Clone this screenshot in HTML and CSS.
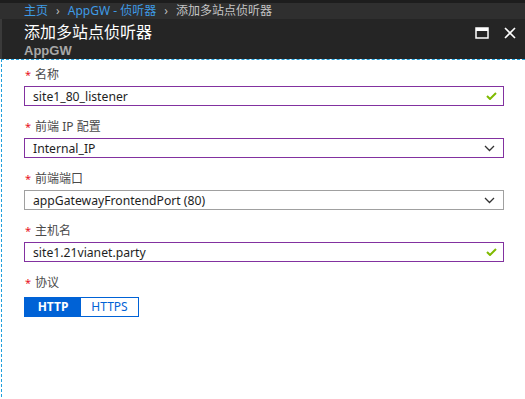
FILE: index.html
```html
<!DOCTYPE html>
<html lang="zh">
<head>
<meta charset="utf-8">
<link rel="stylesheet" href="styles.css">
</head>
<body>
<div class="crumbs">
  <span class="link">主页</span><span class="sep">›</span><span class="link">AppGW - 侦听器</span><span class="sep">›</span><span class="cur">添加多站点侦听器</span>
</div>
<div class="header">
  <div class="titles">
    <div class="title">添加多站点侦听器</div>
    <div class="subtitle">AppGW</div>
  </div>
  <div class="icons">
    <svg width="14" height="12" viewBox="0 0 14 12"><rect x="1" y="1" width="12" height="10" fill="none" stroke="#fff" stroke-width="1.5"/><rect x="1" y="1" width="12" height="3" fill="#fff"/></svg>
    <svg width="12" height="12" viewBox="0 0 12 12"><path d="M1 1L11 11M11 1L1 11" stroke="#fff" stroke-width="1.6"/></svg>
  </div>
</div>
<div class="content">
  <div class="field">
    <div class="label"><span class="req">*</span>名称</div>
    <div class="box valid"><span>site1_80_listener</span>
      <svg class="check" width="11" height="8" viewBox="0 0 11 8"><path d="M1 4L4 7L10 1" fill="none" stroke="#7fba00" stroke-width="2"/></svg>
    </div>
  </div>
  <div class="field">
    <div class="label"><span class="req">*</span>前端 IP 配置</div>
    <div class="box valid"><span>Internal_IP</span>
      <svg class="chev" width="11" height="7" viewBox="0 0 11 7"><path d="M1 1L5.5 5.5L10 1" fill="none" stroke="#333" stroke-width="1.3"/></svg>
    </div>
  </div>
  <div class="field">
    <div class="label"><span class="req">*</span>前端端口</div>
    <div class="box plain"><span>appGatewayFrontendPort (80)</span>
      <svg class="chev" width="11" height="7" viewBox="0 0 11 7"><path d="M1 1L5.5 5.5L10 1" fill="none" stroke="#333" stroke-width="1.3"/></svg>
    </div>
  </div>
  <div class="field">
    <div class="label"><span class="req">*</span>主机名</div>
    <div class="box valid"><span>site1.21vianet.party</span>
      <svg class="check" width="11" height="8" viewBox="0 0 11 8"><path d="M1 4L4 7L10 1" fill="none" stroke="#7fba00" stroke-width="2"/></svg>
    </div>
  </div>
  <div class="field">
    <div class="label"><span class="req">*</span>协议</div>
    <div class="toggle"><span class="opt on">HTTP</span><span class="opt">HTTPS</span></div>
  </div>
</div>
</body>
</html>
```
FILE: styles.css
```css
html, body {
  margin: 0;
  padding: 0;
  background: #fff;
  height: 100%;
}
body {
  font-family: "Noto Sans", "Noto Sans CJK SC", sans-serif;
  overflow: hidden;
}
.crumbs {
  background: #2f2f2f;
  border-top: 3px solid #1d1d1d;
  height: 16px;
  line-height: 16px;
  font-size: 12px;
  padding-left: 24px;
  white-space: nowrap;
  overflow: hidden;
}
.crumbs .link { color: #3e9be6; }
.crumbs .cur { color: #c4c4c4; }
.crumbs .sep { color: #bdbdbd; margin: 0 8px; }
.header {
  background: #252525;
  height: 40px;
  display: flex;
  justify-content: space-between;
  padding-left: 22px;
  padding-right: 9px;
  border-left: 2px solid #3a3a3a;
}
.titles { padding-top: 5px; }
.title {
  color: #fff;
  font-family: "Liberation Sans", "Noto Sans CJK SC", sans-serif;
  font-size: 16px;
  line-height: 18px;
}
.subtitle {
  color: #a8a8a8;
  font-family: "Liberation Sans", sans-serif;
  font-size: 13px;
  font-weight: bold;
  line-height: 15px;
  margin-top: 1px;
}
.icons {
  display: flex;
  gap: 15px;
  padding-top: 8px;
}
.content {
  border-top: 1px dashed #1fa0dc;
  border-left: 1px dashed #1fa0dc;
  margin-left: 1px;
  padding: 7px 21px 0 22px;
  height: calc(100vh - 61px);
  box-sizing: border-box;
}
.field { margin-bottom: 13px; }
.label {
  font-size: 12px;
  line-height: 16px;
  color: #4a4a4a;
  margin-bottom: 3px;
}
.req {
  color: #e81123;
  font-size: 11px;
  margin-left: 1px;
  margin-right: 4px;
}
.box {
  height: 18px;
  border: 1px solid #a0a0a0;
  display: flex;
  align-items: center;
  justify-content: space-between;
  padding: 0 6px 0 8px;
  font-size: 12.2px;
  color: #1e1e1e;
}
.box.valid { border-color: #8231a0; }
.box .chev { margin-right: 2px; }
.toggle {
  display: inline-flex;
  border: 1px solid #0062d6;
  height: 18px;
}
.opt {
  width: 57px;
  text-align: center;
  line-height: 18px;
  font-size: 12px;
  color: #0062d6;
}
.opt.on {
  background: #0062d6;
  color: #fff;
  font-weight: bold;
  width: 56px;
}
```
